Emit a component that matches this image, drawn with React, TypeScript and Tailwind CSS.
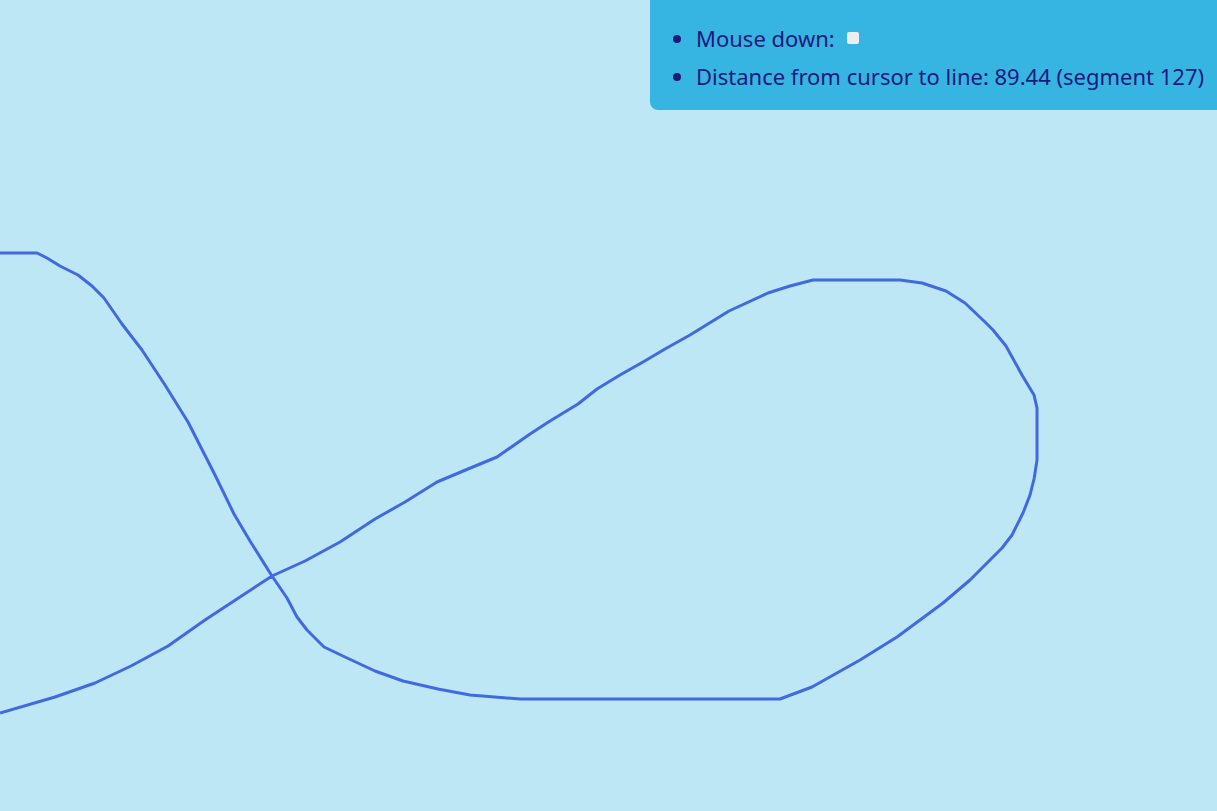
const pts: [number, number][] = [
  [0, 253], [37, 253], [47, 258], [60, 266], [78, 275], [92, 286], [104, 298], [122, 324], [142, 350],
  [165, 385], [188, 422], [215, 475], [234, 514], [250, 541], [272, 576], [287, 598], [297, 617],
  [307, 630], [324, 647], [345, 657], [375, 671], [403, 681], [438, 689], [470, 695], [520, 699],
  [780, 699], [812, 687], [860, 660], [897, 637], [943, 603], [970, 580], [1002, 548], [1012, 535],
  [1023, 513], [1030, 495], [1034, 479], [1035, 473], [1037, 460], [1037, 408], [1034, 395],
  [1022, 375], [1006, 346], [993, 330], [985, 322], [965, 303], [946, 291], [922, 283], [900, 280],
  [813, 280], [790, 286], [768, 293], [729, 311], [690, 335], [665, 349], [643, 362], [620, 375],
  [597, 389], [578, 404], [550, 421], [530, 434], [497, 457], [468, 469], [437, 482], [405, 502],
  [375, 519], [340, 542], [305, 561], [272, 576], [240, 597], [205, 620], [168, 646], [131, 666],
  [95, 683], [55, 697], [0, 713],
];

export default function App() {
  return (
    <div className="relative w-full h-[811px] overflow-hidden bg-[#bde7f5]">
      <svg className="absolute inset-0" width="1217" height="811">
        <polyline
          points={pts.map(p => p.join(',')).join(' ')}
          fill="none"
          stroke="#4169e1"
          strokeWidth={3}
          strokeLinejoin="round"
        />
      </svg>
      <div className="absolute top-0 right-0 w-[567px] h-[110px] bg-[#36b4e2] rounded-bl-lg text-[#1d1a7c] text-[22px] font-['Noto_Sans',sans-serif]">
        <ul className="list-disc pl-[46px] pt-[23px] flex flex-col gap-[8px] leading-[30px]">
          <li>
            <span className="inline-flex items-center gap-[12px]">
              Mouse down:
              <span className="inline-block w-[12px] h-[12px] rounded-[2px] bg-[#eeeeee]" />
            </span>
          </li>
          <li>Distance from cursor to line: 89.44 (segment 127)</li>
        </ul>
      </div>
    </div>
  );
}
